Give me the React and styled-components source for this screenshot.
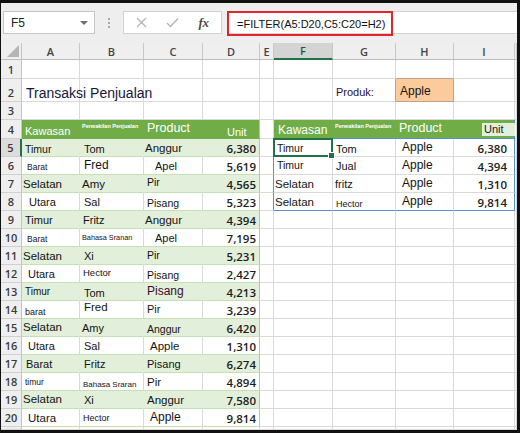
import React from "react";
import styled, { createGlobalStyle } from "styled-components";

const GREEN = "#70ad47";
const BAND = "#e2efda";
const BAND_LINE = "#c6e0b4";
const TABLE_EDGE = "#a9d08e";
const GRID = "#d9d9d9";
const SPILL = "#5b8fd3";
const SELECT = "#217346";

const COLS = ["A", "B", "C", "D", "E", "F", "G", "H", "I"];

// [text, size, indent, extras]
const sales = [
  [["Timur", 10.5, 3], ["Tom", 11, 4, { drop: 1 }], ["Anggur", 11.5, 1], "6,380"],
  [["Barat", 8.5, 3, { box: true }], ["Fred", 12, 4], ["Apel", 11, 9, { box: true }], "5,619"],
  [["Selatan", 11.5, 1], ["Amy", 11.5, 2], ["Pir", 10.5, 3, { raise: 3 }], "4,565"],
  [["Utara", 11, 7], ["Sal", 11, 4], ["Pisang", 10.5, 3], "5,323"],
  [["Timur", 11, 3], ["Fritz", 11, 3], ["Anggur", 11.5, 1], "4,394"],
  [["Barat", 8.5, 3, { box: true }], ["Bahasa Sranan", 7.3, 2, { raise: 3 }], ["Apel", 11, 9, { box: true }], "7,195"],
  [["Selatan", 11.5, 1], ["Xi", 11, 4], ["Pir", 10.5, 3, { raise: 2 }], "5,231"],
  [["Utara", 11, 6], ["Hector", 9.5, 3, { raise: 2 }], ["Pisang", 10.5, 3], "2,427"],
  [["Timur", 10, 3, { raise: 2 }], ["Tom", 11, 4, { drop: 1 }], ["Pisang", 12, 3, { color: "#3b0d2c" }], "4,213"],
  [["barat", 9, 3], ["Fred", 11.5, 4, { raise: 3 }], ["Pir", 11, 3, { raise: 1 }], "3,239"],
  [["Selatan", 11.5, 1, { raise: 1 }], ["Amy", 11, 2], ["Anggur", 10.5, 3], "6,420"],
  [["Utara", 11, 6], ["Sal", 11, 4], ["Apple", 11.5, 6], "1,310"],
  [["Barat", 11, 4], ["Fritz", 11, 4], ["Pisang", 11, 3], "6,274"],
  [["timur", 8.5, 3, { raise: 1 }], ["Bahasa Sraran", 8, 3], ["Pir", 11.5, 3], "4,894"],
  [["Selatan", 11.5, 1, { raise: 1 }], ["Xi", 11, 4], ["Anggur", 11.5, 3], "7,580"],
  [["Utara", 11.5, 6], ["Hector", 9, 3, { raise: 2 }], ["Apple", 12, 6], "9,814"],
];

const filtered = [
  [["Timur", 10.5, 3, { raise: 1 }], ["Tom", 11, 3, { drop: 1 }], ["Apple", 12, 6], "6,380"],
  [["Timur", 10.5, 3, { raise: 2 }], ["Jual", 11, 3], ["Apple", 12, 6], "4,394"],
  [["Selatan", 11.5, 1], ["fritz", 11, 2], ["Apple", 12, 6], "1,310"],
  [["Selatan", 11.5, 1], ["Hector", 9, 3], ["Apple", 12, 6], "9,814"],
];

const GlobalStyle = createGlobalStyle`
  html, body {
    margin: 0;
    padding: 0;
    background: #fff;
  }
  body {
    font-family: "Liberation Sans", Arial, sans-serif;
  }
`;

const Frame = styled.div`
  width: 520px;
  height: 433px;
  box-sizing: border-box;
  border-style: solid;
  border-color: #111;
  border-width: 3px 3px 3px 1px;
  display: flex;
  flex-direction: column;
  overflow: hidden;
  background: #fff;
`;

const Toolbar = styled.div`
  height: 40px;
  flex: none;
  box-sizing: border-box;
  background: #eeeeee;
  display: flex;
  align-items: flex-start;
  padding: 8px 0 0 2px;
`;

const NameBox = styled.div`
  width: 92px;
  height: 23px;
  box-sizing: border-box;
  background: #fff;
  border: 1px solid #c6c6c6;
  display: flex;
  align-items: center;
  justify-content: space-between;
  padding: 0 6px 0 7px;
  font-size: 12px;
  color: #222;
`;

const Caret = styled.span`
  width: 0;
  height: 0;
  border-left: 4px solid transparent;
  border-right: 4px solid transparent;
  border-top: 4px solid #6e6e6e;
`;

const Grip = styled.div`
  width: 28px;
  height: 23px;
  display: flex;
  flex-direction: column;
  align-items: center;
  justify-content: center;
  gap: 2px;

  span {
    width: 2px;
    height: 2px;
    background: #a8a8a8;
  }
`;

const ActionBox = styled.div`
  width: 99px;
  height: 23px;
  box-sizing: border-box;
  background: #fff;
  border: 1px solid #d2d2d2;
  display: flex;
  align-items: center;
  padding: 0 2px;
`;

const ActionSlot = styled.span`
  width: 31px;
  display: flex;
  justify-content: center;
  align-items: center;
  color: #b0b0b0;
`;

const Fx = styled.span`
  font-family: "Liberation Serif", "Times New Roman", serif;
  font-style: italic;
  font-weight: 700;
  font-size: 13px;
  color: #4a4a4a;
  letter-spacing: -0.5px;
`;

const FormulaArea = styled.div`
  flex: 1;
  height: 23px;
  margin-left: 5px;
  box-sizing: border-box;
  background: #fff;
  border-top: 1px solid #d2d2d2;
  border-bottom: 1px solid #d2d2d2;
  display: flex;
`;

const Formula = styled.div`
  width: 166px;
  height: 25px;
  margin-top: -1px;
  box-sizing: border-box;
  border: 2px solid #e0262b;
  display: flex;
  align-items: center;
  padding-left: 8px;
  font-size: 11px;
  color: #111;
`;

const Sheet = styled.div`
  flex: 1;
  display: grid;
  grid-template-columns: 21px 58px 64px 59px 57px 14px 59px 63px 58px 61px 1fr;
  grid-template-rows: 17px 19px 23px 18px 19px repeat(16, 18px) 1fr;
`;

const Corner = styled.div`
  background: #efefef;
  border-right: 1px solid #c4c4c4;
  border-bottom: 1px solid #bdbdbd;
  display: flex;
  align-items: flex-end;
  justify-content: flex-end;
  padding: 0 2px 2px 0;
  box-sizing: border-box;
`;

const ColHead = styled.div`
  box-sizing: border-box;
  background: ${(p) => (p.$active ? "#d4d4d4" : "#efefef")};
  border-right: 1px solid #c8c8c8;
  border-bottom: ${(p) => (p.$active ? `2px solid ${SELECT}` : "1px solid #bdbdbd")};
  display: flex;
  align-items: center;
  justify-content: center;
  font-family: "Open Sans", "Liberation Sans", sans-serif;
  font-weight: 600;
  font-size: 11px;
  color: ${(p) => (p.$active ? "#1e5c3a" : "#444")};
`;

const RowHead = styled.div`
  box-sizing: border-box;
  background: ${(p) => (p.$active ? "#dcdcdc" : "#efefef")};
  border-right: ${(p) => (p.$active ? `2px solid ${SELECT}` : "1px solid #c4c4c4")};
  border-bottom: 1px solid #d0d0d0;
  display: flex;
  align-items: flex-end;
  justify-content: center;
  padding-bottom: 1px;
  font-family: "Open Sans", "Liberation Sans", sans-serif;
  font-weight: 600;
  font-size: 11px;
  color: #3a3a3a;
`;

const Cell = styled.div`
  position: relative;
  box-sizing: border-box;
  min-width: 0;
  background: ${(p) => p.$fill || "#fff"};
  border-right: 1px solid ${(p) => p.$right || GRID};
  border-bottom: 1px solid ${(p) => p.$bottom || GRID};
  display: flex;
  align-items: flex-end;
  justify-content: ${(p) => (p.$num ? "flex-end" : "flex-start")};
  padding: 0 ${(p) => p.$pr || 0}px 1px 0;
  white-space: nowrap;
  overflow: visible;
`;

const CellText = styled.span`
  position: relative;
  z-index: 1;
  margin-left: ${(p) => p.$indent || 0}px;
  font-size: ${(p) => p.$size || 11}px;
  line-height: 1.15;
  color: ${(p) => p.$color || "#141414"};
  font-weight: ${(p) => (p.$bold ? 700 : 400)};
  top: ${(p) => p.$shift || 0}px;
  background: ${(p) => p.$box || "transparent"};
  padding: ${(p) => (p.$box ? "0 2px" : "0")};
  align-self: ${(p) => (p.$top ? "flex-start" : "auto")};
  margin-top: ${(p) => (p.$top ? p.$top : 0)}px;
`;

const NumText = styled(CellText)`
  font-family: "Open Sans", "Liberation Sans", sans-serif;
  font-size: 11.5px;
  font-weight: 600;
  color: #1c1c1c;
`;

const Selection = styled.div`
  position: absolute;
  top: -1px;
  left: -1px;
  right: -1px;
  bottom: -1px;
  border: 2px solid ${SELECT};
  z-index: 3;
  pointer-events: none;
`;

const FillHandle = styled.span`
  position: absolute;
  right: -4px;
  bottom: -4px;
  width: 5px;
  height: 5px;
  background: ${SELECT};
  border: 1px solid #fff;
`;

function Entry({ item }) {
  const [t, s, i, x = {}] = item;
  return (
    <CellText
      $size={s}
      $indent={i}
      $box={x.box ? "#fff" : null}
      $shift={(x.drop || 0) - (x.raise || 0)}
      $color={x.color}
    >
      {t}
    </CellText>
  );
}

function cellFor(row, col) {
  const c = COLS.indexOf(col);
  const inLeft = c <= 3 && row >= 4 && row <= 20;
  const inRight = c >= 5 && row >= 4 && row <= 8;
  const p = {};
  let content = null;

  if (row === 2 && col === "A") {
    content = (
      <CellText $size={14} $indent={4} $color="#16163a" $shift={1}>
        Transaksi Penjualan
      </CellText>
    );
  }
  if (row === 2 && col === "G") {
    content = (
      <CellText $size={11} $indent={3} $color="#2a1030" $shift={-1}>
        Produk:
      </CellText>
    );
  }
  if (row === 2 && col === "H") {
    p.$fill = "#fbcb9c";
    p.$right = "#b9a58f";
    p.$bottom = "#b9a58f";
    content = (
      <CellText $size={12} $indent={4} $shift={-1}>
        Apple
      </CellText>
    );
  }
  if (row === 1 && col === "H") p.$bottom = "#b9a58f";
  if (row === 2 && col === "G") p.$right = "#b9a58f";

  if (inLeft) {
    if (row === 4) {
      p.$fill = GREEN;
      p.$right = c === 3 ? TABLE_EDGE : GREEN;
      p.$bottom = GREEN;
      const head = [
        <CellText $size={11} $indent={3} $color="#fff" $shift={1}>Kawasan</CellText>,
        <CellText $size={5.5} $indent={2} $color="#fff" $top={3} $bold>Perwakilan Penjualan</CellText>,
        <CellText $size={12.5} $indent={3} $color="#fff" $top={1}>Product</CellText>,
        <CellText $size={11} $indent={24} $color="#fff" $shift={2}>Unit</CellText>,
      ];
      content = head[c];
    } else {
      const band = row % 2 === 1;
      p.$fill = band ? BAND : "#fff";
      p.$bottom = BAND_LINE;
      p.$right = c === 3 ? TABLE_EDGE : band ? BAND : GRID;
      const data = sales[row - 5];
      if (c === 3) {
        p.$num = true;
        p.$pr = 3;
        content = <NumText>{data[3]}</NumText>;
      } else {
        content = <Entry item={data[c]} />;
      }
    }
  }

  if (inRight) {
    const k = c - 5;
    if (row === 4) {
      p.$fill = GREEN;
      p.$right = k === 3 ? SPILL : GREEN;
      p.$bottom = SPILL;
      const head = [
        <CellText $size={12} $indent={4} $color="#fff" $shift={1}>Kawasan</CellText>,
        <CellText $size={5.5} $indent={2} $color="#fff" $top={3} $bold>Perwakilan Penjualan</CellText>,
        <CellText $size={12.5} $indent={3} $color="#fff" $top={1}>Product</CellText>,
        <CellText $size={11} $indent={28} $box={BAND} $color="#222" $shift={-1}>
          Unit&nbsp;&nbsp;&nbsp;
        </CellText>,
      ];
      content = head[k];
    } else {
      const data = filtered[row - 5];
      if (k === 3) p.$right = SPILL;
      if (row === 8) p.$bottom = SPILL;
      if (k === 3) {
        p.$num = true;
        p.$pr = 7;
        content = <NumText>{data[3]}</NumText>;
      } else {
        content = <Entry item={data[k]} />;
      }
    }
  }

  if (col === "E" && row >= 5 && row <= 8) p.$right = SPILL;

  const selected = row === 5 && col === "F";
  return (
    <Cell key={`${col}${row}`} {...p}>
      {content}
      {selected && (
        <Selection>
          <FillHandle />
        </Selection>
      )}
    </Cell>
  );
}

const rows = Array.from({ length: 21 }, (_, i) => i + 1);

export default function App() {
  return (
    <>
      <GlobalStyle />
      <Frame>
        <Toolbar>
          <NameBox>
            F5
            <Caret />
          </NameBox>
          <Grip>
            <span />
            <span />
            <span />
          </Grip>
          <ActionBox>
            <ActionSlot>
              <svg width="11" height="11" viewBox="0 0 11 11">
                <path d="M1 1L10 10M10 1L1 10" stroke="#b4b4b4" strokeWidth="1.3" />
              </svg>
            </ActionSlot>
            <ActionSlot>
              <svg width="13" height="11" viewBox="0 0 13 11">
                <path d="M1 6L4.5 9.5L12 1.5" stroke="#b4b4b4" strokeWidth="1.3" fill="none" />
              </svg>
            </ActionSlot>
            <ActionSlot>
              <Fx>fx</Fx>
            </ActionSlot>
          </ActionBox>
          <FormulaArea>
            <Formula>=FILTER(A5:D20,C5:C20=H2)</Formula>
          </FormulaArea>
        </Toolbar>

        <Sheet>
          <Corner>
            <svg width="12" height="12" viewBox="0 0 12 12">
              <path d="M12 0L12 12L0 12Z" fill="#b5b5b5" />
            </svg>
          </Corner>
          {COLS.map((col) => (
            <ColHead key={col} $active={col === "F"}>
              {col}
            </ColHead>
          ))}
          <ColHead />

          {rows.map((row) => (
            <React.Fragment key={row}>
              <RowHead $active={row === 5}>{row <= 20 ? row : ""}</RowHead>
              {COLS.map((col) => cellFor(row, col))}
              <Cell />
            </React.Fragment>
          ))}
        </Sheet>
      </Frame>
    </>
  );
}
